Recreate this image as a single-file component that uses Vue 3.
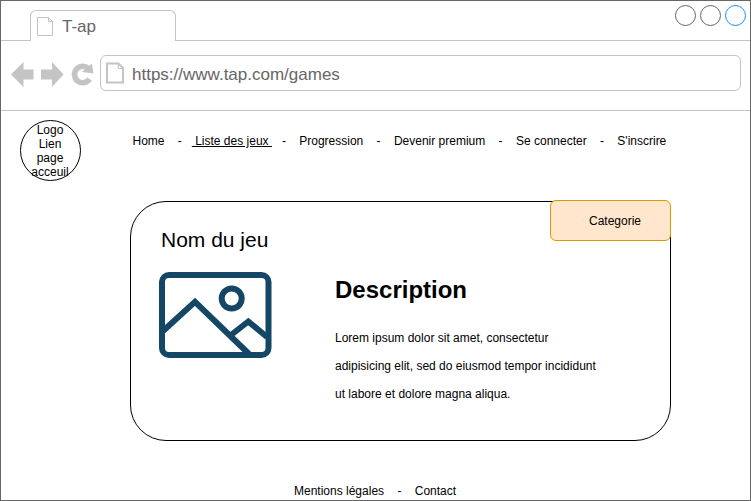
<script setup>
const nav = {
  before: 'Home\u00a0\u00a0\u00a0 -\u00a0\u00a0 ',
  active: '\u00a0Liste des jeux\u00a0',
  after: [
    '',
    'Progression',
    'Devenir premium',
    'Se connecter',
    "S'inscrire",
  ].join('\u00a0\u00a0\u00a0 -\u00a0\u00a0\u00a0 ').slice(1),
}
const footer = 'Mentions légales\u00a0\u00a0\u00a0 -\u00a0\u00a0\u00a0 Contact'
const lines = [
  'Lorem ipsum dolor sit amet, consectetur',
  'adipisicing elit, sed do eiusmod tempor incididunt',
  'ut labore et dolore magna aliqua.',
]
</script>

<template>
  <div class="window">
    <header class="tabbar">
      <div class="tab">
        <svg class="tab-icon" width="18" height="20" viewBox="0 0 18 20">
          <path d="M1.5 1.5H12.5L16.5 5.5V19.5H1.5ZM12.5 1.5V5.5H16.5" fill="none" stroke="#c4c4c4" />
        </svg>
        <span>T-ap</span>
      </div>
      <svg class="controls" width="72" height="22" viewBox="0 0 72 22" fill="none">
        <circle cx="10.5" cy="10.5" r="10" stroke="#666" />
        <circle cx="35.5" cy="10.5" r="10" stroke="#666" />
        <circle cx="60.5" cy="10.5" r="10" stroke="#1890ff" />
      </svg>
    </header>
    <div class="toolbar">
      <svg class="history" width="84" height="26" viewBox="0 0 84 26">
        <g fill="#c4c4c4">
          <path d="M0 13.5L12.5 1V8.5H22.5V18.5H12.5V26Z" />
          <path d="M52.5 13.5L41 1V8.5H30V18.5H41V26Z" />
          <path d="M80.8 2.5L82.5 12.5L70.8 11Z" />
        </g>
        <path d="M77.2 7.4A8.2 8.2 0 1 0 78.6 18" fill="none" stroke="#c4c4c4" stroke-width="5.6" />
      </svg>
      <div class="address">
        <svg class="url-icon" width="20" height="22" viewBox="0 0 20 22">
          <path d="M1 1.5H12.5L17 6V20.5H1Z" fill="none" stroke="#c4c4c4" stroke-width="2" />
          <path d="M12.3 2V6.5H17" fill="none" stroke="#c4c4c4" />
        </svg>
        <span>https://www.tap.com/games</span>
      </div>
    </div>
    <div class="top">
      <a class="logo">Logo<br />Lien<br />page<br />acceuil</a>
      <nav class="nav">{{ nav.before }}<u>{{ nav.active }}</u>{{ nav.after }}</nav>
    </div>
    <main class="card">
      <div class="category">Categorie</div>
      <section class="game">
        <h2>Nom du jeu</h2>
        <svg width="114" height="88" viewBox="0 0 114 88" fill="none" stroke="#144766" stroke-width="6">
          <rect x="4" y="4" width="106.5" height="80" rx="7" />
          <path d="M5 60L37 30.8L91 83M73 64L90.3 50.5L109 66" />
          <circle cx="73.7" cy="27.5" r="10" />
        </svg>
      </section>
      <section class="description">
        <h1>Description</h1>
        <p><span v-for="line in lines" :key="line">{{ line }}</span></p>
      </section>
    </main>
    <footer class="footer">{{ footer }}</footer>
  </div>
</template>

<style>
body {
  margin: 0;
  background: #fff;
}
</style>

<style scoped>
.window {
  box-sizing: border-box;
  width: 751px;
  height: 501px;
  border: 1px solid #666;
  overflow: hidden;
  display: flex;
  flex-direction: column;
  background: #fff;
  color: #000;
  font: 12px/14px "Liberation Sans", Arial, Helvetica, sans-serif;
}
.tabbar {
  box-sizing: border-box;
  flex: none;
  height: 40px;
  padding: 0 3px 0 29px;
  border-bottom: 1px solid #c4c4c4;
  display: flex;
  justify-content: space-between;
}
.tab {
  box-sizing: border-box;
  width: 146px;
  height: 31px;
  margin-top: 9px;
  padding-left: 5px;
  border: 1px solid #c4c4c4;
  border-bottom: 0;
  border-radius: 6px 6px 0 0;
  background: #fff;
  display: flex;
  align-items: center;
  color: #666;
  font-size: 17px;
  line-height: 20px;
}
.tab span {
  margin-left: 8px;
  padding-top: 2px;
}
.controls {
  margin-top: 4px;
}
.toolbar {
  box-sizing: border-box;
  flex: none;
  height: 70px;
  padding: 14px 9px 0 10px;
  border-bottom: 1px solid #c4c4c4;
  display: flex;
}
.history {
  flex: none;
  margin: 6px 5px 0 0;
}
.address {
  box-sizing: border-box;
  flex: 1;
  height: 36px;
  padding-left: 5px;
  border: 1px solid #c4c4c4;
  border-radius: 6px;
  display: flex;
  align-items: center;
  color: #666;
  font-size: 17px;
  line-height: 20px;
}
.address span {
  margin-left: 6px;
  padding-top: 4px;
}
.top {
  flex: none;
  display: flex;
  padding: 9px 0 0 19px;
}
.logo {
  box-sizing: border-box;
  width: 61px;
  height: 61px;
  border: 1px solid #000;
  border-radius: 50%;
  padding: 2px 1px 0 0;
  text-align: center;
}
.nav {
  margin: 14px 0 0 51.5px;
  white-space: pre;
}
.card {
  box-sizing: border-box;
  position: relative;
  flex: none;
  width: 541px;
  height: 240px;
  margin: 20px 0 0 129px;
  border: 1px solid #000;
  border-radius: 36px;
  display: flex;
}
.category {
  position: absolute;
  top: -2px;
  right: -1px;
  box-sizing: border-box;
  width: 121px;
  height: 41px;
  padding: 13px 0 0 38px;
  border: 1px solid #d79b00;
  border-radius: 6px;
  background: #ffe6cc;
}
.game {
  width: 177px;
  padding: 26px 0 0 27px;
}
.game h2 {
  margin: 0 0 19px 3px;
  font-size: 21px;
  font-weight: 400;
  line-height: 24px;
}
.game svg {
  display: block;
}
.description h1 {
  margin: 74px 0 0;
  font-size: 24px;
  line-height: 28px;
}
.description p {
  margin: 20px 0 0;
  line-height: 28px;
}
.description span {
  display: block;
  white-space: nowrap;
}
.footer {
  margin: 43px 0 0 293px;
  white-space: pre;
}
</style>
